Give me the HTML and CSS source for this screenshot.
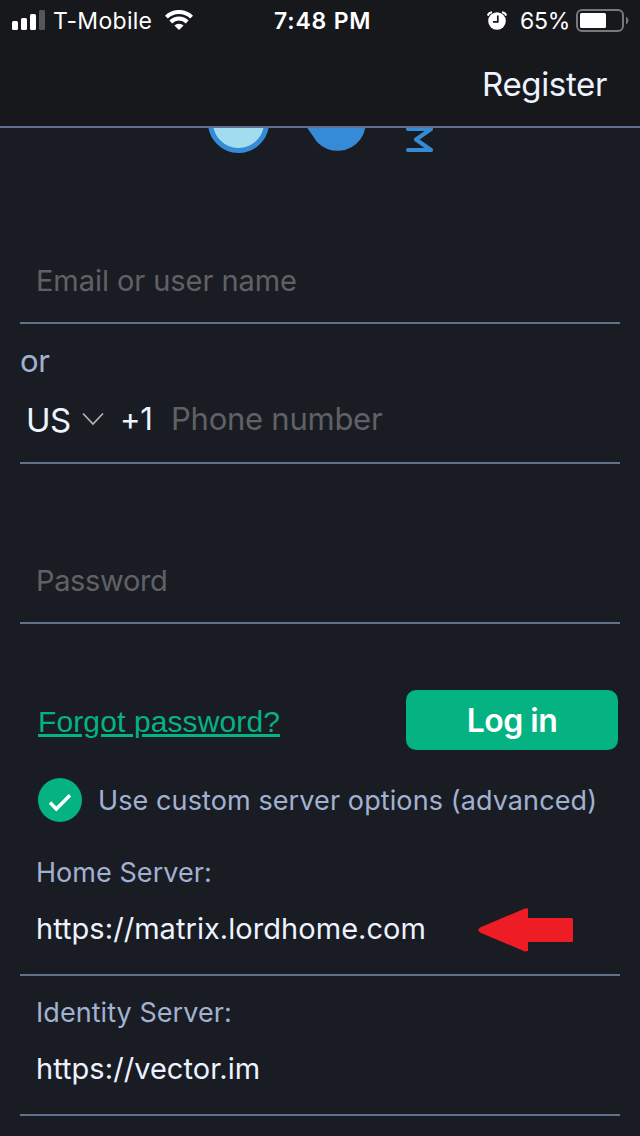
FILE: index.html
```html
<!DOCTYPE html>
<html lang="en">
<head>
    <meta charset="UTF-8" />
    <meta name="viewport" content="width=device-width, initial-scale=1.0" />
    <title>Log in</title>
    <link rel="stylesheet" href="styles.css">
</head>
<body>
    <div class="status-bar">
        <svg class="signal" width="33" height="20" viewBox="0 0 33 20">
            <g fill="#fff">
                <rect x="0" y="11" width="6" height="9" rx="1.5" />
                <rect x="9" y="8" width="6" height="12" rx="1.5" />
                <rect x="18" y="4" width="6" height="16" rx="1.5" />
            </g>
            <rect x="27" y="0" width="6" height="20" rx="1.5" fill="#55565a" />
        </svg>
        <span class="carrier">T-Mobile</span>
        <svg class="wifi" width="28" height="20" viewBox="0 0 28 20">
            <g fill="none" stroke="#fff" stroke-width="4">
                <path d="M1.4 7.1 A18 18 0 0 1 26.6 7.1" />
                <path d="M5.8 12 A11.6 11.6 0 0 1 22.2 12" />
            </g>
            <path d="M9.4 15.6 A6.6 6.6 0 0 1 18.6 15.6 L14 20 Z" fill="#fff" />
        </svg>
        <span class="time">7:48 PM</span>
        <svg class="alarm" width="20" height="19" viewBox="0 0 20 19">
            <circle cx="10" cy="10" r="8.8" fill="#fff" />
            <path d="M0.8 4.6 A5 5 0 0 1 5 1.2 M15 1.2 A5 5 0 0 1 19.2 4.6" fill="none" stroke="#fff" stroke-width="2" />
            <path d="M10.8 4.5 V10.8 H6" fill="none" stroke="#17181c" stroke-width="1.7" />
        </svg>
        <span class="percent">65%</span>
        <svg class="battery" width="53" height="23" viewBox="0 0 53 23">
            <rect x="1" y="1" width="46" height="21" rx="5" fill="none" stroke="#77787b" stroke-width="2" />
            <rect x="4" y="4" width="26" height="15" rx="1.5" fill="#fff" />
            <path d="M50 7.5 A4.5 4.5 0 0 1 50 15.5 Z" fill="#77787b" />
        </svg>
    </div>

    <div class="nav-bar">
        <a class="register">Register</a>
    </div>

    <div class="content">
        <svg class="logo" width="640" height="112" viewBox="0 0 640 112">
            <circle cx="238.5" cy="-5.5" r="28" fill="#a2ddef" stroke="#368bd6" stroke-width="5" />
            <path d="M306 -2 L317 14 A28.3 28.3 0 1 0 310 -12 Z" fill="#368bd6" />
            <path d="M408 1 H431 L416 11.5 L431 22 H408" fill="none" stroke="#368bd6" stroke-width="4" stroke-linecap="round" stroke-linejoin="round" />
        </svg>

        <div class="field email">
            <span class="placeholder">Email or user name</span>
        </div>
        <div class="or">or</div>
        <div class="field phone">
            <span class="country">US</span>
            <svg class="chevron" width="22" height="14" viewBox="0 0 22 14">
                <path d="M1 1.5 L11 12 L21 1.5" fill="none" stroke="#b5b5b0" stroke-width="1.7" />
            </svg>
            <span class="prefix">+1</span>
            <span class="placeholder phone-number">Phone number</span>
        </div>
        <div class="field password">
            <span class="placeholder">Password</span>
        </div>

        <div class="actions">
            <a class="forgot">Forgot password?</a>
            <button class="login">Log in</button>
        </div>

        <div class="custom-server">
            <svg class="tick" width="44" height="44" viewBox="0 0 44 44">
                <circle cx="22" cy="22" r="22" fill="#04b381" />
                <path d="M12 24.5 L18.3 31 L32 17.3" fill="none" stroke="#fff" stroke-width="3.4" />
            </svg>
            <span class="option">Use custom server options (advanced)</span>
        </div>

        <div class="field server">
            <span class="label">Home Server:</span>
            <span class="value">https://matrix.lordhome.com</span>
            <svg class="arrow" width="96" height="44" viewBox="0 0 96 44">
                <path d="M0 22 L2 19.5 L47 0.5 L50 0.5 V10 H94 L95 11 V33 L94 34 H50 V43 L47 43.5 L2 24.5 Z" fill="#ee1d25" />
            </svg>
        </div>
        <div class="field server">
            <span class="label">Identity Server:</span>
            <span class="value">https://vector.im</span>
        </div>
    </div>
</body>
</html>
```
FILE: styles.css
```css
* {
    box-sizing: border-box;
}

body {
    margin: 0;
    width: 640px;
    height: 1136px;
    overflow: hidden;
    background-color: #1a1c24;
    color: #edf3ff;
    font-family: Inter, "Liberation Sans", sans-serif;
}

svg {
    display: block;
    flex-shrink: 0;
}

.status-bar {
    display: flex;
    align-items: center;
    height: 40px;
    padding-left: 12px;
    background-color: #17181c;
    color: #fff;
    font-size: 23px;
    line-height: 40px;
    white-space: nowrap;
}

.carrier {
    margin-left: 8px;
    width: 112px;
    padding-top: 2px;
    letter-spacing: 0.3px;
}

.time {
    margin-left: 81px;
    width: 213px;
    padding-top: 2px;
    font-weight: 600;
    letter-spacing: 0.8px;
}

.percent {
    margin-left: 13px;
    width: 56px;
    padding-top: 2px;
    letter-spacing: -0.2px;
}

.nav-bar {
    display: flex;
    justify-content: flex-end;
    height: 88px;
    padding-right: 33px;
    background-color: #17181b;
    border-bottom: 2px solid #61708b;
}

.register {
    font-size: 33px;
    letter-spacing: -0.35px;
    line-height: 88px;
}

.field {
    display: flex;
    margin: 0 20px;
    padding-left: 16px;
    border-bottom: 2px solid #61708b;
    font-size: 29px;
    white-space: nowrap;
}

.placeholder {
    color: #606164;
}

.email {
    height: 84px;
    letter-spacing: -0.06px;
    line-height: 82px;
}

.or {
    height: 56px;
    padding-left: 20px;
    color: #a1b2d1;
    font-size: 31px;
    letter-spacing: -0.4px;
    line-height: 74px;
}

.phone {
    align-items: center;
    height: 84px;
    padding: 0 0 4px 6px;
    line-height: 78px;
}

.country {
    width: 56px;
    padding-top: 2px;
    font-size: 33px;
    letter-spacing: -0.5px;
}

.prefix {
    margin-left: 16px;
    width: 51px;
    font-size: 31px;
    letter-spacing: -0.2px;
}

.phone-number {
    font-size: 31px;
    letter-spacing: -0.25px;
}

.password {
    margin-top: 76px;
    height: 84px;
    letter-spacing: -0.35px;
    line-height: 82px;
}

.actions {
    display: flex;
    justify-content: space-between;
    margin: 66px 22px 0 38px;
}

.forgot {
    color: #04b381;
    font-family: "Liberation Sans", sans-serif;
    font-size: 30px;
    letter-spacing: 0.12px;
    line-height: 64px;
    text-decoration: underline;
}

.login {
    width: 212px;
    height: 60px;
    padding: 0;
    border: none;
    border-radius: 10px;
    background-color: #04b381;
    color: #fff;
    font-family: inherit;
    font-size: 32px;
    font-weight: 600;
    letter-spacing: -0.5px;
}

.custom-server {
    display: flex;
    align-items: center;
    height: 44px;
    margin: 24px 0 14px 38px;
    color: #a1b2d1;
    font-size: 27px;
    letter-spacing: 0.1px;
    white-space: nowrap;
}

.option {
    margin-left: 16px;
}

.server {
    flex-wrap: wrap;
    align-content: flex-start;
    height: 140px;
}

.label {
    width: 100%;
    height: 72px;
    color: #a1b2d1;
    font-size: 27px;
    letter-spacing: 0.05px;
    line-height: 74px;
}

.value {
    width: 442px;
    letter-spacing: 0.05px;
    line-height: 42px;
}
```
